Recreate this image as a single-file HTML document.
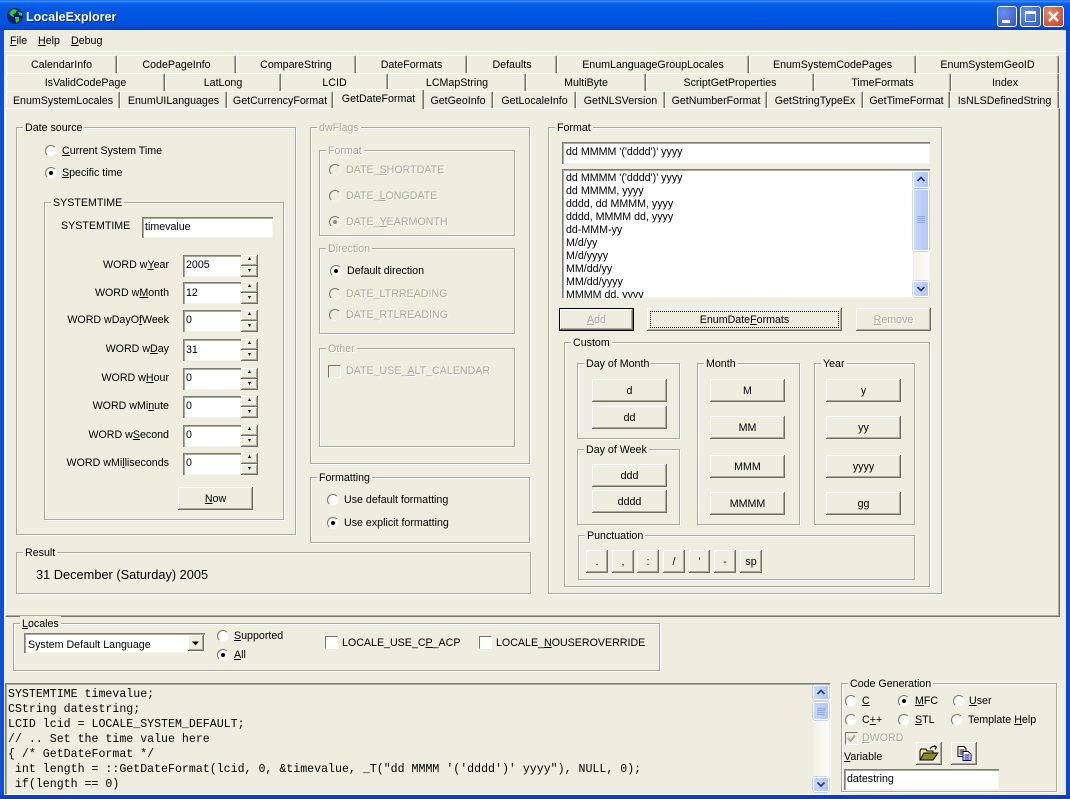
<!DOCTYPE html>
<html><head><meta charset="utf-8"><title>LocaleExplorer</title>
<style>
html,body{margin:0;padding:0}
body{width:1070px;height:799px;overflow:hidden;position:relative;background:#EEEDDF;font:10.67px "Liberation Sans",sans-serif;color:#000}
div,span,i{box-sizing:border-box}
.t{position:absolute;line-height:16px;white-space:nowrap}
.d{color:#ACA899;text-shadow:1px 1px 0 #fff}
.r{text-align:right}
.g{position:absolute;border:1px solid #A9A899;box-shadow:1px 1px 0 #fff,inset 1px 1px 0 #fff}
.g>span{position:absolute;left:6px;top:-8px;background:#EEEDDF;padding:0 2px;line-height:16px;height:14px;white-space:nowrap}
.tab{position:absolute;text-align:center;background:#EEEDDF;border-top:1px solid #fff;border-left:1px solid #fff;border-right:1px solid #77756a;box-shadow:inset -1px 0 0 #ACA899;line-height:19px;height:18px;white-space:nowrap;border-radius:2px 2px 0 0}
.b{position:absolute;background:#EEEDDF;text-align:center;box-shadow:inset -1px -1px 0 #716F64,inset 1px 1px 0 #fff,inset -2px -2px 0 #ACA899;line-height:24px}
.e{position:absolute;background:#fff;box-shadow:inset 1px 1px 0 #7F7D72,inset 2px 2px 0 #A9A899,inset -1px -1px 0 #F5F4EC;line-height:14px;white-space:nowrap;overflow:hidden}
.o{position:absolute;width:12px;height:12px;border-radius:50%;background:#fff;border:1px solid;border-color:#77756a #f4f3ea #f4f3ea #77756a;box-shadow:0 0 0 1px #EEEDDF}
.o.k::after{content:"";position:absolute;left:3px;top:3px;width:4px;height:4px;border-radius:50%;background:#000}
.o.n{background:#EEEDDF}
.o.n.k::after{background:#888}
.c{position:absolute;width:13px;height:13px;background:#fff;border:1px solid;border-color:#77756a #fff #fff #77756a}
.sb{position:absolute;background:linear-gradient(90deg,#F3F1E6,#FDFCF8)}
.sa,.st{position:absolute;left:0;width:100%;background:linear-gradient(90deg,#CBDAFB,#B0C6F5);border:1px solid #fff;border-radius:2px;box-shadow:0 0 0 .5px #9db4e8}
.s{font-size:6px}
.u{line-height:9px}
.w{line-height:10px}
</style></head><body>

<div style="position:absolute;left:0;top:0;width:1070px;height:30px;background:linear-gradient(180deg,#0A5AE0 0,#3E95FF 1px,#0B64EA 3px,#0257E3 8px,#0054E3 18px,#0150DC 24px,#0246C8 29px,#0A3CB0 30px)"></div>
<div style="position:absolute;left:0;top:30px;width:4px;height:769px;background:#0A4FDD"></div>
<div style="position:absolute;right:0;top:30px;width:4px;height:769px;background:#0A48CC"></div>
<div style="position:absolute;left:0;top:795px;width:1070px;height:4px;background:#0A3FC0"></div>

<svg style="position:absolute;left:6px;top:7px" width="18" height="18" viewBox="0 0 18 18"><circle cx="9" cy="9" r="8" fill="#0A1A70"/><path d="M3 6 L7 2 L11 3 L10 6 L7 7 L8 10 L5 9 Z M9 10 L13 10 L13 14 L10 16 Z M12 5 L16 6 L16 9 L13 8 Z" fill="#1FD62F"/></svg>
<div class="t" style="left:26px;top:9px;font-size:12.5px;font-weight:bold;color:#fff;text-shadow:1px 1px 0 #0A2F96">LocaleExplorer</div>

<div style="position:absolute;left:997px;top:6px;width:20px;height:21px;border:1px solid #fff;border-radius:3px;background:radial-gradient(circle at 30% 30%,#6A90EC,#2F55CC)"><i style="position:absolute;left:4px;top:13px;width:8px;height:3px;background:#fff"></i></div>
<div style="position:absolute;left:1020px;top:6px;width:21px;height:21px;border:1px solid #fff;border-radius:3px;background:radial-gradient(circle at 30% 30%,#6A90EC,#2F55CC)"><i style="position:absolute;left:4px;top:4px;width:11px;height:11px;border:1px solid #fff;border-top-width:3px"></i></div>
<div style="position:absolute;left:1043px;top:6px;width:21px;height:21px;border:1px solid #fff;border-radius:3px;background:radial-gradient(circle at 30% 30%,#E8896A,#C8401C)"><svg style="position:absolute;left:3px;top:3px" width="13" height="13" viewBox="0 0 13 13"><path d="M2 2 L11 11 M11 2 L2 11" stroke="#fff" stroke-width="2.4"/></svg></div>

<div class="t" style="left:10px;top:33px"><u>F</u>ile</div>
<div class="t" style="left:38px;top:33px"><u>H</u>elp</div>
<div class="t" style="left:71px;top:33px"><u>D</u>ebug</div>
<div style="position:absolute;left:4px;top:51px;width:1062px;height:1px;background:#fff"></div>

<!-- page -->
<div style="position:absolute;left:5px;top:108px;width:1055px;height:509px;border:1px solid;border-color:#fff #77756a #77756a #fff;box-shadow:inset -1px -1px 0 #ACA899"></div>

<!-- tabs row1 -->
<div class="tab" style="left:6px;top:55px;width:111px">CalendarInfo</div>
<div class="tab" style="left:117px;top:55px;width:119px">CodePageInfo</div>
<div class="tab" style="left:236px;top:55px;width:120px">CompareString</div>
<div class="tab" style="left:356px;top:55px;width:111px">DateFormats</div>
<div class="tab" style="left:467px;top:55px;width:90px">Defaults</div>
<div class="tab" style="left:557px;top:55px;width:192px">EnumLanguageGroupLocales</div>
<div class="tab" style="left:749px;top:55px;width:167px">EnumSystemCodePages</div>
<div class="tab" style="left:916px;top:55px;width:143px">EnumSystemGeoID</div>
<!-- row2 -->
<div class="tab" style="left:6px;top:73px;width:159px">IsValidCodePage</div>
<div class="tab" style="left:165px;top:73px;width:116px">LatLong</div>
<div class="tab" style="left:281px;top:73px;width:107px">LCID</div>
<div class="tab" style="left:388px;top:73px;width:138px">LCMapString</div>
<div class="tab" style="left:526px;top:73px;width:120px">MultiByte</div>
<div class="tab" style="left:646px;top:73px;width:168px">ScriptGetProperties</div>
<div class="tab" style="left:814px;top:73px;width:137px">TimeFormats</div>
<div class="tab" style="left:951px;top:73px;width:108px">Index</div>
<!-- row3 -->
<div class="tab" style="left:6px;top:91px;width:114px;height:17px">EnumSystemLocales</div>
<div class="tab" style="left:120px;top:91px;width:107px;height:17px">EnumUILanguages</div>
<div class="tab" style="left:227px;top:91px;width:106px;height:17px">GetCurrencyFormat</div>
<div class="tab" style="left:423px;top:91px;width:70px;height:17px">GetGeoInfo</div>
<div class="tab" style="left:493px;top:91px;width:83px;height:17px">GetLocaleInfo</div>
<div class="tab" style="left:576px;top:91px;width:89px;height:17px">GetNLSVersion</div>
<div class="tab" style="left:665px;top:91px;width:102px;height:17px">GetNumberFormat</div>
<div class="tab" style="left:767px;top:91px;width:96px;height:17px">GetStringTypeEx</div>
<div class="tab" style="left:863px;top:91px;width:87px;height:17px">GetTimeFormat</div>
<div class="tab" style="left:950px;top:91px;width:109px;height:17px">IsNLSDefinedString</div>
<div class="tab" style="left:333px;top:89px;width:91px;height:20px;line-height:18px;z-index:2">GetDateFormat</div>

<!-- Date source -->
<div class="g" style="left:16px;top:127px;width:280px;height:408px"><span>Date source</span></div>
<div class="o" style="left:45px;top:145px"></div><div class="t" style="left:62px;top:143px"><u>C</u>urrent System Time</div>
<div class="o k" style="left:45px;top:167px"></div><div class="t" style="left:62px;top:165px"><u>S</u>pecific time</div>
<div class="g" style="left:44px;top:202px;width:240px;height:318px"><span>SYSTEMTIME</span></div>
<div class="t" style="left:61px;top:218px">SYSTEMTIME</div>
<div class="e" style="left:142px;top:217px;width:131px;height:21px;padding:3px 3px">timevalue</div>

<div class="t r" style="right:901px;top:257px">WORD w<u>Y</u>ear</div><div class="e" style="left:183px;top:255px;width:58px;height:22px;padding:3px 3px">2005</div>
<div class="t r" style="right:901px;top:285px">WORD w<u>M</u>onth</div><div class="e" style="left:183px;top:282px;width:58px;height:22px;padding:4px 3px">12</div>
<div class="t r" style="right:901px;top:312px">WORD wDayO<u>f</u>Week</div><div class="e" style="left:183px;top:310px;width:58px;height:22px;padding:3px 3px">0</div>
<div class="t r" style="right:901px;top:341px">WORD w<u>D</u>ay</div><div class="e" style="left:183px;top:339px;width:58px;height:22px;padding:4px 3px">31</div>
<div class="t r" style="right:901px;top:370px">WORD w<u>H</u>our</div><div class="e" style="left:183px;top:368px;width:58px;height:22px;padding:3px 3px">0</div>
<div class="t r" style="right:901px;top:398px">WORD wMi<u>n</u>ute</div><div class="e" style="left:183px;top:396px;width:58px;height:22px;padding:3px 3px">0</div>
<div class="t r" style="right:901px;top:427px">WORD w<u>S</u>econd</div><div class="e" style="left:183px;top:425px;width:58px;height:22px;padding:3px 3px">0</div>
<div class="t r" style="right:901px;top:455px">WORD wMi<u>l</u>liseconds</div><div class="e" style="left:183px;top:453px;width:58px;height:22px;padding:3px 3px">0</div>

<div class="b s u" style="left:241px;top:255px;width:17px;height:11px">▴</div><div class="b s w" style="left:241px;top:266px;width:17px;height:11px">▾</div>
<div class="b s u" style="left:241px;top:282px;width:17px;height:11px">▴</div><div class="b s w" style="left:241px;top:293px;width:17px;height:11px">▾</div>
<div class="b s u" style="left:241px;top:310px;width:17px;height:11px">▴</div><div class="b s w" style="left:241px;top:321px;width:17px;height:11px">▾</div>
<div class="b s u" style="left:241px;top:339px;width:17px;height:11px">▴</div><div class="b s w" style="left:241px;top:350px;width:17px;height:11px">▾</div>
<div class="b s u" style="left:241px;top:368px;width:17px;height:11px">▴</div><div class="b s w" style="left:241px;top:379px;width:17px;height:11px">▾</div>
<div class="b s u" style="left:241px;top:396px;width:17px;height:11px">▴</div><div class="b s w" style="left:241px;top:407px;width:17px;height:11px">▾</div>
<div class="b s u" style="left:241px;top:425px;width:17px;height:11px">▴</div><div class="b s w" style="left:241px;top:436px;width:17px;height:11px">▾</div>
<div class="b s u" style="left:241px;top:453px;width:17px;height:11px">▴</div><div class="b s w" style="left:241px;top:464px;width:17px;height:11px">▾</div>
<div class="b" style="left:178px;top:487px;width:75px;height:23px"><u>N</u>ow</div>

<!-- dwFlags -->
<div class="g" style="left:310px;top:127px;width:220px;height:337px"><span class="d">dwFlags</span></div>
<div class="g" style="left:319px;top:150px;width:196px;height:86px"><span class="d">Format</span></div>
<div class="o n" style="left:329px;top:164px"></div><div class="t d" style="left:346px;top:162px">DATE_<u>S</u>HORTDATE</div>
<div class="o n" style="left:329px;top:190px"></div><div class="t d" style="left:346px;top:188px">DATE_<u>L</u>ONGDATE</div>
<div class="o n k" style="left:329px;top:216px"></div><div class="t d" style="left:346px;top:214px">DATE_<u>Y</u>EARMONTH</div>
<div class="g" style="left:319px;top:248px;width:196px;height:86px"><span class="d">Direction</span></div>
<div class="o k" style="left:330px;top:265px"></div><div class="t" style="left:347px;top:263px">Default direction</div>
<div class="o n" style="left:329px;top:288px"></div><div class="t d" style="left:346px;top:286px">DATE_LTRREADING</div>
<div class="o n" style="left:329px;top:309px"></div><div class="t d" style="left:346px;top:307px">DATE_RTLREADING</div>
<div class="g" style="left:319px;top:348px;width:196px;height:99px"><span class="d">Other</span></div>
<div class="c" style="left:328px;top:365px;background:#EEEDDF"></div><div class="t d" style="left:346px;top:363px">DATE_USE_<u>A</u>LT_CALENDAR</div>

<div class="g" style="left:310px;top:477px;width:220px;height:66px"><span>Formatting</span></div>
<div class="o" style="left:327px;top:494px"></div><div class="t" style="left:344px;top:492px">Use default formatting</div>
<div class="o k" style="left:327px;top:517px"></div><div class="t" style="left:344px;top:515px">Use explicit formatting</div>

<div class="g" style="left:16px;top:552px;width:515px;height:42px"><span>Result</span></div>
<div class="t" style="left:36px;top:567px;font-size:12.8px">31 December (Saturday) 2005</div>

<!-- Format -->
<div class="g" style="left:548px;top:127px;width:394px;height:467px"><span>Format</span></div>
<div class="e" style="left:562px;top:142px;width:368px;height:22px;padding:3px 4px">dd MMMM '('dddd')' yyyy</div>
<div class="e" style="left:562px;top:169px;width:368px;height:129px;line-height:13px;padding:3px 4px">dd MMMM '('dddd')' yyyy<br>dd MMMM, yyyy<br>dddd, dd MMMM, yyyy<br>dddd, MMMM dd, yyyy<br>dd-MMM-yy<br>M/d/yy<br>M/d/yyyy<br>MM/dd/yy<br>MM/dd/yyyy<br>MMMM dd, yyyy</div>
<div class="sb" style="left:913px;top:171px;width:16px;height:126px">
<div class="sa" style="top:0;height:17px"><svg width="14" height="15" viewBox="0 0 14 15" style="display:block"><path d="M3.5 9 L7 5.5 L10.5 9" fill="none" stroke="#2A3C78" stroke-width="1.8"/></svg></div>
<div class="st" style="top:18px;height:62px"><svg width="14" height="60" viewBox="0 0 14 60" style="display:block"><path d="M3 26.5h8M3 28.5h8M3 30.5h8M3 32.5h8" stroke="#8CA8E8"/></svg></div>
<div class="sa" style="top:110px;height:16px"><svg width="14" height="14" viewBox="0 0 14 14" style="display:block"><path d="M3.5 5 L7 8.5 L10.5 5" fill="none" stroke="#2A3C78" stroke-width="1.8"/></svg></div>
</div>
<div class="b" style="left:559px;top:308px;width:75px;height:23px;line-height:22px;border:1px solid #000"><span class="d"><u>A</u>dd</span></div>
<div class="b" style="left:647px;top:308px;width:195px;height:23px">EnumDate<u>F</u>ormats<i style="position:absolute;left:3px;top:3px;right:3px;bottom:3px;border:1px dotted #000"></i></div>
<div class="b" style="left:856px;top:308px;width:75px;height:23px"><span class="d"><u>R</u>emove</span></div>

<div class="g" style="left:564px;top:342px;width:366px;height:245px"><span>Custom</span></div>
<div class="g" style="left:577px;top:363px;width:103px;height:76px"><span>Day of Month</span></div>
<div class="b" style="left:592px;top:379px;width:75px;height:23px">d</div>
<div class="b" style="left:592px;top:406px;width:75px;height:23px">dd</div>
<div class="g" style="left:577px;top:449px;width:103px;height:76px"><span>Day of Week</span></div>
<div class="b" style="left:592px;top:464px;width:75px;height:23px">ddd</div>
<div class="b" style="left:592px;top:490px;width:75px;height:23px">dddd</div>
<div class="g" style="left:697px;top:363px;width:103px;height:162px"><span>Month</span></div>
<div class="b" style="left:710px;top:379px;width:75px;height:23px">M</div>
<div class="b" style="left:710px;top:416px;width:75px;height:23px">MM</div>
<div class="b" style="left:710px;top:455px;width:75px;height:23px">MMM</div>
<div class="b" style="left:710px;top:492px;width:75px;height:23px">MMMM</div>
<div class="g" style="left:814px;top:363px;width:101px;height:162px"><span>Year</span></div>
<div class="b" style="left:826px;top:379px;width:75px;height:23px">y</div>
<div class="b" style="left:826px;top:416px;width:75px;height:23px">yy</div>
<div class="b" style="left:826px;top:455px;width:75px;height:23px">yyyy</div>
<div class="b" style="left:826px;top:492px;width:75px;height:23px">gg</div>
<div class="g" style="left:578px;top:535px;width:337px;height:45px"><span>Punctuation</span></div>
<div class="b" style="left:586px;top:550px;width:22px;height:23px">.</div>
<div class="b" style="left:612px;top:550px;width:22px;height:23px">,</div>
<div class="b" style="left:637px;top:550px;width:22px;height:23px">:</div>
<div class="b" style="left:663px;top:550px;width:22px;height:23px">/</div>
<div class="b" style="left:689px;top:550px;width:21px;height:23px">'</div>
<div class="b" style="left:714px;top:550px;width:22px;height:23px">-</div>
<div class="b" style="left:740px;top:550px;width:22px;height:23px">sp</div>

<!-- Locales -->
<div class="g" style="left:13px;top:623px;width:647px;height:48px"><span><u>L</u>ocales</span></div>
<div class="e" style="left:24px;top:633px;width:181px;height:20px;padding:5px 4px">System Default Language</div>
<div class="b" style="left:188px;top:635px;width:16px;height:16px"><svg width="16" height="16" viewBox="0 0 16 16" style="display:block"><path d="M4 6.500h7l-3.500 4z" fill="#000"/></svg></div>
<div class="o" style="left:217px;top:630px"></div><div class="t" style="left:234px;top:628px"><u>S</u>upported</div>
<div class="o k" style="left:217px;top:649px"></div><div class="t" style="left:234px;top:647px"><u>A</u>ll</div>
<div class="c" style="left:325px;top:636px"></div><div class="t" style="left:342px;top:635px">LOCALE_USE_C<u>P</u>_ACP</div>
<div class="c" style="left:479px;top:636px"></div><div class="t" style="left:496px;top:635px">LOCALE_<u>N</u>OUSEROVERRIDE</div>

<!-- Code -->
<div style="position:absolute;left:5px;top:683px;width:826px;height:112px;border:1px solid;border-color:#7F7D72 #fff #fff #7F7D72;box-shadow:inset 1px 1px 0 #A9A899;overflow:hidden;padding:3px 0 0 2px;font:11.6px/15px 'Liberation Mono',monospace;white-space:pre">SYSTEMTIME timevalue;
CString datestring;
LCID lcid = LOCALE_SYSTEM_DEFAULT;
// .. Set the time value here
{ /* GetDateFormat */
 int length = ::GetDateFormat(lcid, 0, &amp;timevalue, _T("dd MMMM '('dddd')' yyyy"), NULL, 0);
 if(length == 0)</div>
<div class="sb" style="left:813px;top:685px;width:16px;height:108px">
<div class="sa" style="top:0;height:15px"><svg width="14" height="13" viewBox="0 0 14 13" style="display:block"><path d="M3.5 8 L7 4.500 L10.5 8" fill="none" stroke="#2A3C78" stroke-width="1.8"/></svg></div>
<div class="st" style="top:17px;height:18px"><svg width="14" height="16" viewBox="0 0 14 16" style="display:block"><path d="M3 5.500h8M3 7.500h8M3 9.500h8M3 11.500h8" stroke="#8CA8E8"/></svg></div>
<div class="sa" style="top:92px;height:15px"><svg width="14" height="13" viewBox="0 0 14 13" style="display:block"><path d="M3.5 4.500 L7 8 L10.5 4.500" fill="none" stroke="#2A3C78" stroke-width="1.8"/></svg></div>
</div>

<!-- Code generation -->
<div class="g" style="left:841px;top:683px;width:216px;height:109px"><span>Code Generation</span></div>
<div class="o" style="left:845px;top:695px"></div><div class="t" style="left:862px;top:693px"><u>C</u></div>
<div class="o k" style="left:898px;top:695px"></div><div class="t" style="left:915px;top:693px"><u>M</u>FC</div>
<div class="o" style="left:953px;top:695px"></div><div class="t" style="left:969px;top:693px"><u>U</u>ser</div>
<div class="o" style="left:845px;top:714px"></div><div class="t" style="left:862px;top:712px">C<u>+</u>+</div>
<div class="o" style="left:898px;top:714px"></div><div class="t" style="left:915px;top:712px"><u>S</u>TL</div>
<div class="o" style="left:951px;top:714px"></div><div class="t" style="left:968px;top:712px">Template <u>H</u>elp</div>
<div class="c" style="left:845px;top:732px;background:#EEEDDF"><svg width="11" height="11" viewBox="0 0 11 11" style="display:block"><path d="M2 5 L4.500 8 L9 2.500" fill="none" stroke="#ACA899" stroke-width="1.8"/></svg></div>
<div class="t d" style="left:862px;top:730px"><u>D</u>WORD</div>
<div class="t" style="left:844px;top:749px"><u>V</u>ariable</div>
<div class="b" style="left:916px;top:742px;width:26px;height:23px"><svg width="22" height="18" viewBox="0 0 22 18" style="position:absolute;left:2px;top:2px"><path d="M2 7 L2 16 L15 16 L15 7 L9 7 L8 5 L3 5 Z" fill="#F2E88A" stroke="#000"/><path d="M2 16 L6 9 L20 9 L15 16 Z" fill="#8C8A28" stroke="#000"/><path d="M12 5 Q14 1 18 3 M16 1.500 L18.500 3 L17 5.500" fill="none" stroke="#000"/></svg></div>
<div class="b" style="left:951px;top:742px;width:26px;height:23px"><svg width="18" height="17" viewBox="0 0 18 17" style="position:absolute;left:5px;top:3px"><path d="M2 1.500h6l2 2v8H2z" fill="#fff" stroke="#000"/><path d="M3.500 5h5M3.500 7h5M3.500 9h5" stroke="#000"/><path d="M7 6.500h5l3 2.500v6.500H7z" fill="#fff" stroke="#00007A"/><path d="M8.500 10h5M8.500 12h5M8.500 14h5" stroke="#00007A"/></svg></div>
<div class="e" style="left:844px;top:769px;width:155px;height:21px;padding:3px 3px">datestring</div>

</body></html>
